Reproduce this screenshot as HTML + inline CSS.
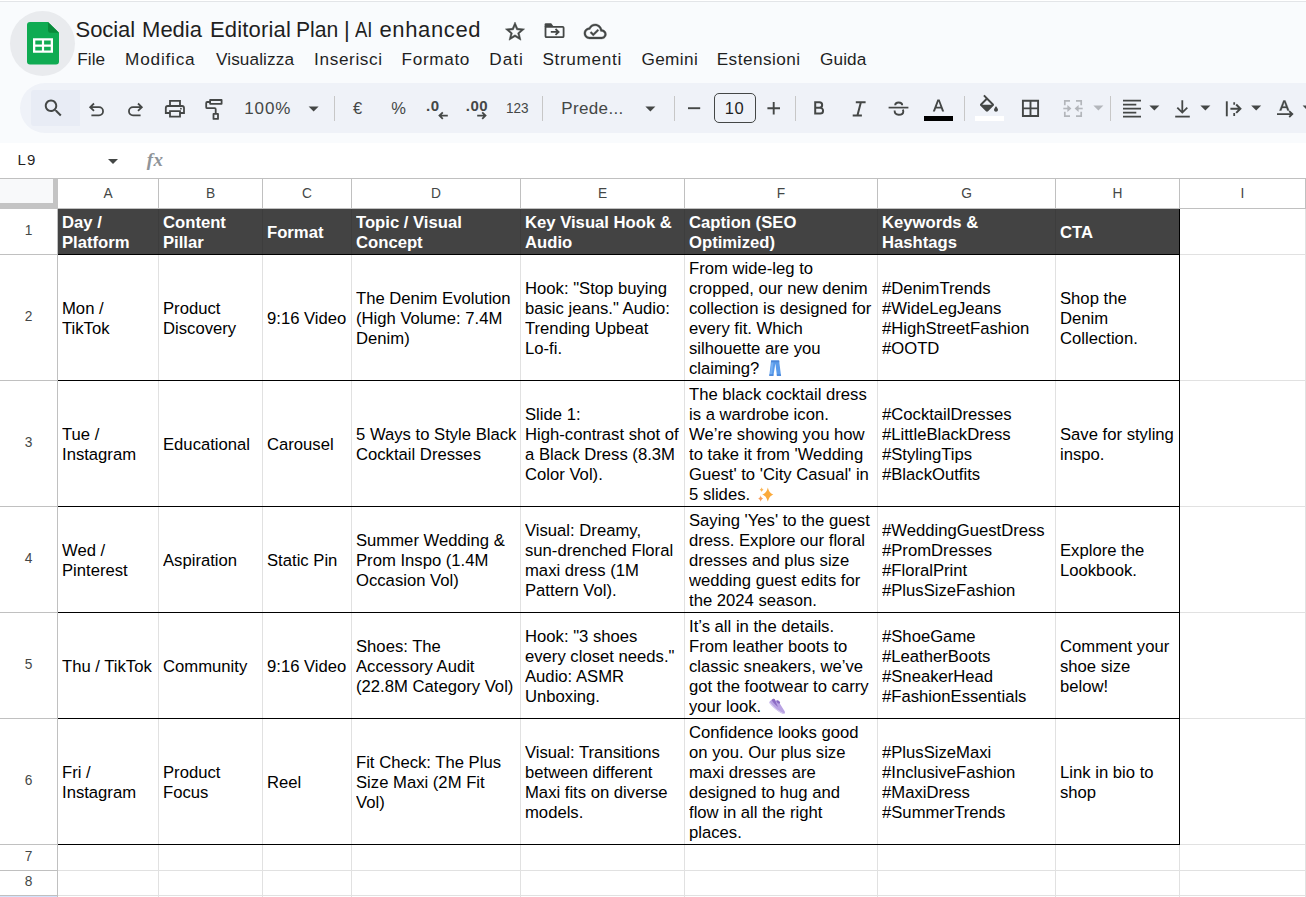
<!DOCTYPE html><html><head><meta charset="utf-8"><title>Social Media Editorial Plan</title><style>
*{box-sizing:border-box;margin:0;padding:0}
html,body{width:1306px;height:897px;overflow:hidden;background:#f9fbfd}
body{font-family:"Liberation Sans",sans-serif;position:relative;color:#1f1f1f}
.abs{position:absolute}
.t{position:absolute;white-space:nowrap;line-height:1}
.ln{position:absolute}
.cell{position:absolute;display:flex;align-items:center;font-size:16.67px;line-height:20px;white-space:nowrap;color:#000;overflow:hidden}
.hd{color:#fff;font-weight:bold}
.ch{position:absolute;top:179px;height:29px;text-align:center;font-size:13.75px;line-height:29px;color:#444746}
.rh{position:absolute;left:0;width:57px;text-align:center;font-size:13.75px;color:#444746;margin-top:-1px}
svg{position:absolute;overflow:visible}
</style></head><body>
<div class="abs" style="left:20px;top:83px;width:1320px;height:50px;border-radius:25px;background:#eff2f8"></div>
<div class="abs" style="left:31px;top:89.5px;width:48.7px;height:36px;border-radius:3px 0 0 3px;background:#e8ecf5"></div>
<div class="abs" style="left:0;top:143px;width:1306px;height:36px;background:#fff"></div>
<div class="abs" style="left:0;top:179px;width:1306px;height:718px;background:#fff"></div>
<div class="abs" style="left:0;top:0;width:1306px;height:1px;background:#fff"></div>
<div class="abs" style="left:0;top:1px;width:1306px;height:1px;background:#e3e5e8"></div>
<div class="abs" style="left:10px;top:11px;width:65px;height:65px;border-radius:50%;background:#e9ebee"></div>
<svg style="left:27px;top:21.6px" width="32" height="42.4" viewBox="0 0 32 43" preserveAspectRatio="none">
<path d="M3 0H21L32 11V40a3 3 0 0 1-3 3H3a3 3 0 0 1-3-3V3a3 3 0 0 1 3-3z" fill="#0fab52"/>
<path d="M21 0L32 11H24a3 3 0 0 1-3-3z" fill="#088a3a"/>
<path d="M6 16.5H26V31.3H6zM8.3 18.8V22.8H14.9V18.8zM17.1 18.8V22.8H23.7V18.8zM8.3 25V29H14.9V25zM17.1 25V29H23.7V25z" fill="#fff" fill-rule="evenodd"/>
</svg>
<div class="t" style="left:75.60px;top:17.28px;font-size:22px;line-height:26px;letter-spacing:-0.086px;color:#1f1f1f">Social</div>
<div class="t" style="left:142.10px;top:17.28px;font-size:22px;line-height:26px;letter-spacing:-0.021px;color:#1f1f1f">Media</div>
<div class="t" style="left:209.90px;top:17.28px;font-size:22px;line-height:26px;letter-spacing:0.188px;color:#1f1f1f">Editorial</div>
<div class="t" style="left:296.24px;top:17.28px;font-size:22px;line-height:26px;transform:scaleX(0.9618);transform-origin:0 0;color:#1f1f1f">Plan</div>
<div class="t" style="left:344.00px;top:17.28px;font-size:22px;line-height:26px;letter-spacing:0.000px;color:#1f1f1f">|</div>
<div class="t" style="left:354.80px;top:17.28px;font-size:22px;line-height:26px;transform:scaleX(0.8387);transform-origin:0 0;color:#1f1f1f">AI</div>
<div class="t" style="left:379.50px;top:17.28px;font-size:22px;line-height:26px;letter-spacing:0.627px;color:#1f1f1f">enhanced</div>
<div class="t" style="left:77.30px;top:48.74px;font-size:17.2px;line-height:21px;letter-spacing:0.055px;color:#1f1f1f">File</div>
<div class="t" style="left:125.10px;top:48.74px;font-size:17.2px;line-height:21px;letter-spacing:0.794px;color:#1f1f1f">Modifica</div>
<div class="t" style="left:216.00px;top:48.74px;font-size:17.2px;line-height:21px;letter-spacing:0.099px;color:#1f1f1f">Visualizza</div>
<div class="t" style="left:314.10px;top:48.74px;font-size:17.2px;line-height:21px;letter-spacing:0.623px;color:#1f1f1f">Inserisci</div>
<div class="t" style="left:401.60px;top:48.74px;font-size:17.2px;line-height:21px;letter-spacing:0.628px;color:#1f1f1f">Formato</div>
<div class="t" style="left:489.30px;top:48.74px;font-size:17.2px;line-height:21px;letter-spacing:0.951px;color:#1f1f1f">Dati</div>
<div class="t" style="left:542.40px;top:48.74px;font-size:17.2px;line-height:21px;letter-spacing:0.659px;color:#1f1f1f">Strumenti</div>
<div class="t" style="left:641.40px;top:48.74px;font-size:17.2px;line-height:21px;letter-spacing:0.395px;color:#1f1f1f">Gemini</div>
<div class="t" style="left:716.70px;top:48.74px;font-size:17.2px;line-height:21px;letter-spacing:0.458px;color:#1f1f1f">Estensioni</div>
<div class="t" style="left:820.00px;top:48.74px;font-size:17.2px;line-height:21px;letter-spacing:0.124px;color:#1f1f1f">Guida</div>
<div class="t" style="left:244.30px;top:99.21px;font-size:17px;line-height:20px;letter-spacing:0.845px;color:#444746">100%</div>
<div class="t" style="left:353.00px;top:98.08px;font-size:16.5px;line-height:20px;letter-spacing:0.000px;color:#444746">€</div>
<div class="t" style="left:391.30px;top:98.28px;font-size:16.5px;line-height:20px;letter-spacing:0.000px;color:#444746">%</div>
<div class="t" style="left:505.58px;top:98.97px;font-size:14.8px;line-height:18px;transform:scaleX(0.9165);transform-origin:0 0;color:#444746">123</div>
<div class="t" style="left:561.20px;top:99.21px;font-size:17px;line-height:20px;letter-spacing:0.370px;color:#444746">Prede...</div>
<div class="t" style="left:724.70px;top:98.18px;font-size:16.5px;line-height:20px;letter-spacing:0.523px;color:#1f1f1f">10</div>
<div class="t" style="left:426.00px;top:96.60px;font-size:15px;line-height:18px;letter-spacing:0.633px;color:#444746;font-weight:bold">.0</div>
<div class="t" style="left:465.80px;top:96.60px;font-size:15px;line-height:18px;letter-spacing:0.495px;color:#444746;font-weight:bold">.00</div>
<div class="t" style="left:17.40px;top:151.30px;font-size:15px;line-height:18px;letter-spacing:1.158px;color:#1f1f1f">L9</div>
<div class="t" style="left:146.80px;top:147.92px;font-size:19px;line-height:23px;letter-spacing:0.273px;color:#8f9499;font-weight:bold;font-style:italic;font-family:'Liberation Serif',serif">fx</div>
<div class="abs" style="left:334px;top:96px;width:1px;height:25px;background:#c7c7c7"></div>
<div class="abs" style="left:542px;top:96px;width:1px;height:25px;background:#c7c7c7"></div>
<div class="abs" style="left:674px;top:96px;width:1px;height:25px;background:#c7c7c7"></div>
<div class="abs" style="left:795px;top:96px;width:1px;height:25px;background:#c7c7c7"></div>
<div class="abs" style="left:964px;top:96px;width:1px;height:25px;background:#c7c7c7"></div>
<div class="abs" style="left:1110px;top:96px;width:1px;height:25px;background:#c7c7c7"></div>
<div class="abs" style="left:714px;top:93px;width:42px;height:30px;border:1px solid #444746;border-radius:5px"></div>
<div class="abs" style="left:924px;top:116px;width:29px;height:5px;background:#000"></div>
<div class="abs" style="left:975px;top:116px;width:29px;height:5px;background:#fff"></div>
<svg style="left:0;top:0" width="1306" height="200" viewBox="0 0 1306 200"><path transform="translate(503.5 20.1) scale(0.9583)" d="M22 9.24l-7.19-.62L12 2 9.19 8.63 2 9.24l5.46 4.73L5.82 21 12 17.27 18.18 21l-1.63-7.03L22 9.24zM12 15.4l-3.76 2.27 1-4.28-3.32-2.88 4.38-.38L12 6.1l1.71 4.04 4.38.38-3.32 2.88 1 4.28L12 15.4z" fill="#444746" stroke="#444746" stroke-width="0.5"/><path d="M544.6 26.6V24.5a1.2 1.2 0 0 1 1.2 -1.2H551.2L553.6 26.6z" fill="#444746"/><path d="M545.5 26.8H562.6a1 1 0 0 1 1 1V36.2a1 1 0 0 1 -1 1H546.5a1 1 0 0 1 -1 -1z" fill="none" stroke="#444746" stroke-width="1.8" stroke-linecap="butt" stroke-linejoin="miter"/><path d="M550.8 31.9H558.2M555.5 29L558.6 31.9L555.5 34.8" fill="none" stroke="#444746" stroke-width="1.8" stroke-linecap="butt" stroke-linejoin="miter"/><path transform="translate(583.9 20.15) scale(0.9375)" d="M19.35 10.04C18.67 6.59 15.64 4 12 4 9.11 4 6.6 5.64 5.35 8.04 2.34 8.36 0 10.91 0 14c0 3.31 2.69 6 6 6h13c2.76 0 5-2.24 5-5 0-2.64-2.05-4.78-4.65-4.96zM19 18H6c-2.21 0-4-1.79-4-4 0-2.05 1.53-3.76 3.56-3.97l1.07-.11.5-.95C8.08 7.14 9.94 6 12 6c2.62 0 4.88 1.86 5.39 4.43l.3 1.5 1.53.11c1.56.1 2.78 1.41 2.78 2.96 0 1.65-1.35 3-3 3zm-9-3.82l-2.09-2.09L6.5 13.5 10 17l6.01-6.01-1.41-1.41z" fill="#444746" stroke="#444746" stroke-width="0.4"/><path transform="translate(41.9 96.6) scale(0.9583)" d="M15.5 14h-.79l-.28-.27C15.41 12.59 16 11.11 16 9.5 16 5.91 13.09 3 9.5 3S3 5.91 3 9.5 5.91 16 9.5 16c1.61 0 3.09-.59 4.23-1.57l.27.28v.79l5 4.99L20.49 19l-4.99-5zm-6 0C7.01 14 5 11.99 5 9.5S7.01 5 9.5 5 14 7.01 14 9.5 11.99 14 9.5 14z" fill="#444746"/><path d="M94 103.5L90.2 107.2L94 110.9M90.3 107.2H99a4.05 4.05 0 0 1 0 8.1H91.4" fill="none" stroke="#444746" stroke-width="1.8" stroke-linecap="butt" stroke-linejoin="miter"/><path d="M138 103.5L141.8 107.2L138 110.9M141.7 107.2H133a4.05 4.05 0 0 0 0 8.1H140.6" fill="none" stroke="#444746" stroke-width="1.8" stroke-linecap="butt" stroke-linejoin="miter"/><path d="M170 105.6V100.9H180V105.6" fill="none" stroke="#444746" stroke-width="1.8" stroke-linecap="butt" stroke-linejoin="miter"/><path d="M170 113H165.8V108a2 2 0 0 1 2 -2H182a2 2 0 0 1 2 2V113H180" fill="none" stroke="#444746" stroke-width="1.8" stroke-linecap="butt" stroke-linejoin="miter"/><path d="M170 111.2H180V116.6H170z" fill="none" stroke="#444746" stroke-width="1.8" stroke-linecap="butt" stroke-linejoin="miter"/><circle cx="180.9" cy="108.7" r="0.9" fill="#444746"/><path d="M210.1 100H221.6V103.8H210.1z" fill="none" stroke="#444746" stroke-width="1.8" stroke-linecap="butt" stroke-linejoin="round"/><path d="M210.1 102H207.2a1 1 0 0 0 -1 1V107.2a1 1 0 0 0 1 1H214.7a1 1 0 0 1 1 1V113.5" fill="none" stroke="#444746" stroke-width="1.8" stroke-linecap="butt" stroke-linejoin="miter"/><path d="M213.5 113.9H218V118.9H213.5z" fill="none" stroke="#444746" stroke-width="1.8" stroke-linecap="butt" stroke-linejoin="round"/><path d="M308.6 106.5h10l-5.0 5z" fill="#444746"/><path d="M447.8 115.6H439.5M442.8 112.4L439.5 115.6L442.8 118.8" fill="none" stroke="#444746" stroke-width="1.8" stroke-linecap="butt" stroke-linejoin="miter"/><path d="M477.2 115.6H485.5M482.2 112.4L485.5 115.6L482.2 118.8" fill="none" stroke="#444746" stroke-width="1.8" stroke-linecap="butt" stroke-linejoin="miter"/><path d="M645.4 106.5h10l-5.0 5z" fill="#444746"/><path d="M688 108.2H700.2" fill="none" stroke="#444746" stroke-width="1.9" stroke-linecap="butt" stroke-linejoin="miter"/><path d="M767.4 108.2H780M773.7 101.9V114.5" fill="none" stroke="#444746" stroke-width="1.9" stroke-linecap="butt" stroke-linejoin="miter"/><path d="M815.2 101.3V114.5M814.2 102.3H819.4a2.75 2.75 0 0 1 0 5.5H815.2M815.2 107.8H820.2a2.85 2.85 0 0 1 0 5.7H814.2" fill="none" stroke="#444746" stroke-width="2.0" stroke-linecap="butt" stroke-linejoin="miter"/><path d="M855.8 102.3H865.6M852.7 115.6H861.9M860.9 102.3L857.4 115.6" fill="none" stroke="#444746" stroke-width="2.0" stroke-linecap="butt" stroke-linejoin="miter"/><path d="M888.6 107.6H908.4" fill="none" stroke="#444746" stroke-width="1.7" stroke-linecap="butt" stroke-linejoin="miter"/><path d="M902.2 105.2C902.2 103.3 900.7 102.5 898.6 102.5C896.5 102.5 895.2 103.4 895.2 105.2" fill="none" stroke="#444746" stroke-width="1.9" stroke-linecap="butt" stroke-linejoin="miter"/><path d="M894.6 110.6C894.6 113.3 896.2 114.8 898.7 114.8C901.5 114.8 903.3 113.5 903.3 111.4C903.3 110.7 903.1 110.1 902.6 109.6" fill="none" stroke="#444746" stroke-width="1.9" stroke-linecap="butt" stroke-linejoin="miter"/><path d="M937.4 99.6h2.2l4.6 12h-2.1l-1.1-3.1h-5l-1.1 3.1h-2.1zM936.7 106.8h3.7l-1.85-5.2z" fill="#444746" fill-rule="evenodd"/><path transform="translate(977 94.7) scale(1.0000)" d="M16.56 8.94L7.62 0 6.21 1.41l2.38 2.38-5.15 5.15c-.59.59-.59 1.54 0 2.12l5.5 5.5c.29.29.68.44 1.06.44s.77-.15 1.06-.44l5.5-5.5c.59-.58.59-1.53 0-2.12zM5.21 10L10 5.21 14.79 10H5.21zM19 11.5s-2 2.17-2 3.5c0 1.1.9 2 2 2s2-.9 2-2c0-1.33-2-3.5-2-3.5z" fill="#444746"/><path transform="translate(1019.1 97) scale(0.9500)" d="M3 3v18h18V3H3zm8 16H5v-6h6v6zm0-8H5V5h6v6zm8 8h-6v-6h6v6zm0-8h-6V5h6v6z" fill="#444746"/><path d="M1070 100.9H1064.8V105.3M1070 116.2H1064.8V111.8M1076 100.9H1081.2V105.3M1076 116.2H1081.2V111.8" fill="none" stroke="#b3b6bb" stroke-width="1.7" stroke-linecap="butt" stroke-linejoin="miter"/><path d="M1063.3 108.5H1068.5" fill="none" stroke="#b3b6bb" stroke-width="1.6" stroke-linecap="butt" stroke-linejoin="miter"/><path d="M1067.4 104.9L1071.4 108.5L1067.4 112.1z" fill="#b3b6bb"/><path d="M1082.7 108.5H1077.5" fill="none" stroke="#b3b6bb" stroke-width="1.6" stroke-linecap="butt" stroke-linejoin="miter"/><path d="M1078.6 104.9L1074.6 108.5L1078.6 112.1z" fill="#b3b6bb"/><path d="M1093.4 105.6h10l-5.0 5z" fill="#b3b6bb"/><path d="M1123 100.5H1141M1123 104.55H1136.3M1123 108.6H1141M1123 112.55H1136.3M1123 116.5H1141" fill="none" stroke="#444746" stroke-width="1.75" stroke-linecap="butt" stroke-linejoin="miter"/><path d="M1149.4 105.6h10l-5.0 5z" fill="#444746"/><path d="M1182.3 100.2V112.4M1177.3 107.6L1182.3 112.6L1187.3 107.6" fill="none" stroke="#444746" stroke-width="1.8" stroke-linecap="butt" stroke-linejoin="miter"/><path d="M1175.2 116.6H1189.8" fill="none" stroke="#444746" stroke-width="1.8" stroke-linecap="butt" stroke-linejoin="miter"/><path d="M1200.4 105.6h10l-5.0 5z" fill="#444746"/><path d="M1226.8 101.3V116.3" fill="none" stroke="#444746" stroke-width="1.9" stroke-linecap="butt" stroke-linejoin="miter"/><path d="M1230.4 108.7H1239.6M1236.2 104.5L1240.4 108.7L1236.2 112.9" fill="none" stroke="#444746" stroke-width="2.0" stroke-linecap="butt" stroke-linejoin="miter"/><path d="M1234.2 102.2V104.8M1234.2 112.9V116" fill="none" stroke="#444746" stroke-width="1.8" stroke-linecap="butt" stroke-linejoin="miter"/><path d="M1251.2 105.6h10l-5.0 5z" fill="#444746"/><path d="M1283.4 100.5h1.9l3.9 10h-1.8l-.95-2.6h-4.2l-.95 2.6h-1.8zM1282.8 106.4h3.1l-1.55-4.3z" fill="#444746" fill-rule="evenodd" stroke="#444746" stroke-width="0.35"/><path d="M1277 114.1H1291.8M1289.2 111.2L1292.3 114.1L1289.2 117" fill="none" stroke="#444746" stroke-width="1.8" stroke-linecap="butt" stroke-linejoin="miter"/><path d="M1302.6 105.6h10l-5.0 5z" fill="#444746"/></svg>
<svg style="left:107.5px;top:159px" width="10" height="5" viewBox="0 0 10 5"><path d="M0 0H10L5 5z" fill="#444746"/></svg>
<div class="ln" style="left:0;top:178px;width:1306px;height:1px;background:#c0c0c0"></div>
<div class="abs" style="left:0;top:179px;width:53px;height:24px;background:#f8f9fa"></div>
<div class="abs" style="left:53px;top:179px;width:5px;height:30px;background:#c4c4c4"></div>
<div class="abs" style="left:0;top:203px;width:58px;height:6px;background:#c4c4c4"></div>
<div class="ln" style="left:158px;top:179px;width:1px;height:30px;background:#c0c0c0"></div>
<div class="ln" style="left:262px;top:179px;width:1px;height:30px;background:#c0c0c0"></div>
<div class="ln" style="left:351px;top:179px;width:1px;height:30px;background:#c0c0c0"></div>
<div class="ln" style="left:520px;top:179px;width:1px;height:30px;background:#c0c0c0"></div>
<div class="ln" style="left:684px;top:179px;width:1px;height:30px;background:#c0c0c0"></div>
<div class="ln" style="left:877px;top:179px;width:1px;height:30px;background:#c0c0c0"></div>
<div class="ln" style="left:1055px;top:179px;width:1px;height:30px;background:#c0c0c0"></div>
<div class="ln" style="left:1179px;top:179px;width:1px;height:30px;background:#c0c0c0"></div>
<div class="ln" style="left:1305px;top:179px;width:1px;height:30px;background:#c0c0c0"></div>
<div class="ch" style="left:58px;width:100px">A</div>
<div class="ch" style="left:159px;width:103px">B</div>
<div class="ch" style="left:263px;width:88px">C</div>
<div class="ch" style="left:352px;width:168px">D</div>
<div class="ch" style="left:521px;width:163px">E</div>
<div class="ch" style="left:685px;width:192px">F</div>
<div class="ch" style="left:878px;width:177px">G</div>
<div class="ch" style="left:1056px;width:123px">H</div>
<div class="ch" style="left:1180px;width:125px">I</div>
<div class="ln" style="left:58px;top:208px;width:1248px;height:1px;background:#c0c0c0"></div>
<div class="ln" style="left:158px;top:209px;width:1px;height:688px;background:#e1e1e1"></div>
<div class="ln" style="left:262px;top:209px;width:1px;height:688px;background:#e1e1e1"></div>
<div class="ln" style="left:351px;top:209px;width:1px;height:688px;background:#e1e1e1"></div>
<div class="ln" style="left:520px;top:209px;width:1px;height:688px;background:#e1e1e1"></div>
<div class="ln" style="left:684px;top:209px;width:1px;height:688px;background:#e1e1e1"></div>
<div class="ln" style="left:877px;top:209px;width:1px;height:688px;background:#e1e1e1"></div>
<div class="ln" style="left:1055px;top:209px;width:1px;height:688px;background:#e1e1e1"></div>
<div class="ln" style="left:1179px;top:209px;width:1px;height:688px;background:#e1e1e1"></div>
<div class="ln" style="left:1305px;top:209px;width:1px;height:688px;background:#e1e1e1"></div>
<div class="ln" style="left:58px;top:254px;width:1248px;height:1px;background:#e1e1e1"></div>
<div class="ln" style="left:58px;top:380px;width:1248px;height:1px;background:#e1e1e1"></div>
<div class="ln" style="left:58px;top:506px;width:1248px;height:1px;background:#e1e1e1"></div>
<div class="ln" style="left:58px;top:612px;width:1248px;height:1px;background:#e1e1e1"></div>
<div class="ln" style="left:58px;top:718px;width:1248px;height:1px;background:#e1e1e1"></div>
<div class="ln" style="left:58px;top:844px;width:1248px;height:1px;background:#e1e1e1"></div>
<div class="ln" style="left:58px;top:870px;width:1248px;height:1px;background:#e1e1e1"></div>
<div class="ln" style="left:58px;top:895px;width:1248px;height:1px;background:#e1e1e1"></div>
<div class="ln" style="left:57px;top:209px;width:1px;height:688px;background:#c0c0c0"></div>
<div class="ln" style="left:0;top:254px;width:57px;height:1px;background:#c0c0c0"></div>
<div class="ln" style="left:0;top:380px;width:57px;height:1px;background:#c0c0c0"></div>
<div class="ln" style="left:0;top:506px;width:57px;height:1px;background:#c0c0c0"></div>
<div class="ln" style="left:0;top:612px;width:57px;height:1px;background:#c0c0c0"></div>
<div class="ln" style="left:0;top:718px;width:57px;height:1px;background:#c0c0c0"></div>
<div class="ln" style="left:0;top:844px;width:57px;height:1px;background:#c0c0c0"></div>
<div class="ln" style="left:0;top:870px;width:57px;height:1px;background:#c0c0c0"></div>
<div class="ln" style="left:0;top:895px;width:57px;height:1px;background:#c0c0c0"></div>
<div class="rh" style="top:209px;height:45px;line-height:45px">1</div>
<div class="rh" style="top:255px;height:125px;line-height:125px">2</div>
<div class="rh" style="top:381px;height:125px;line-height:125px">3</div>
<div class="rh" style="top:507px;height:105px;line-height:105px">4</div>
<div class="rh" style="top:613px;height:105px;line-height:105px">5</div>
<div class="rh" style="top:719px;height:125px;line-height:125px">6</div>
<div class="rh" style="top:845px;height:25px;line-height:25px">7</div>
<div class="rh" style="top:871px;height:24px;line-height:24px">8</div>
<div class="abs" style="left:0;top:896px;width:57px;height:1px;background:#d3e3fd"></div>
<div class="abs" style="left:58px;top:209px;width:1121px;height:45px;background:#434343"></div>
<div class="ln" style="left:158px;top:209px;width:1px;height:45px;background:#3d3d3d"></div>
<div class="ln" style="left:262px;top:209px;width:1px;height:45px;background:#3d3d3d"></div>
<div class="ln" style="left:351px;top:209px;width:1px;height:45px;background:#3d3d3d"></div>
<div class="ln" style="left:520px;top:209px;width:1px;height:45px;background:#3d3d3d"></div>
<div class="ln" style="left:684px;top:209px;width:1px;height:45px;background:#3d3d3d"></div>
<div class="ln" style="left:877px;top:209px;width:1px;height:45px;background:#3d3d3d"></div>
<div class="ln" style="left:1055px;top:209px;width:1px;height:45px;background:#3d3d3d"></div>
<div class="ln" style="left:58px;top:254px;width:1122px;height:1px;background:#000"></div>
<div class="ln" style="left:58px;top:380px;width:1122px;height:1px;background:#000"></div>
<div class="ln" style="left:58px;top:506px;width:1122px;height:1px;background:#000"></div>
<div class="ln" style="left:58px;top:612px;width:1122px;height:1px;background:#000"></div>
<div class="ln" style="left:58px;top:718px;width:1122px;height:1px;background:#000"></div>
<div class="ln" style="left:58px;top:844px;width:1122px;height:1px;background:#000"></div>
<div class="ln" style="left:1179px;top:209px;width:1px;height:636px;background:#000"></div>
<div class="cell hd" style="left:62px;top:210px;width:96px;height:45px"><div>Day /<br>Platform</div></div>
<div class="cell hd" style="left:163px;top:210px;width:99px;height:45px"><div>Content<br>Pillar</div></div>
<div class="cell hd" style="left:267px;top:210px;width:84px;height:45px"><div>Format</div></div>
<div class="cell hd" style="left:356px;top:210px;width:164px;height:45px"><div>Topic / Visual<br>Concept</div></div>
<div class="cell hd" style="left:525px;top:210px;width:159px;height:45px"><div>Key Visual Hook &amp;<br>Audio</div></div>
<div class="cell hd" style="left:689px;top:210px;width:188px;height:45px"><div>Caption (SEO<br>Optimized)</div></div>
<div class="cell hd" style="left:882px;top:210px;width:173px;height:45px"><div>Keywords &amp;<br>Hashtags</div></div>
<div class="cell hd" style="left:1060px;top:210px;width:119px;height:45px"><div>CTA</div></div>
<div class="cell " style="left:62px;top:256px;width:96px;height:125px"><div>Mon /<br>TikTok</div></div>
<div class="cell " style="left:163px;top:256px;width:99px;height:125px"><div>Product<br>Discovery</div></div>
<div class="cell " style="left:267px;top:256px;width:84px;height:125px"><div>9:16 Video</div></div>
<div class="cell " style="left:356px;top:256px;width:164px;height:125px"><div>The Denim Evolution<br>(High Volume: 7.4M<br>Denim)</div></div>
<div class="cell " style="left:525px;top:256px;width:159px;height:125px"><div>Hook: "Stop buying<br>basic jeans." Audio:<br>Trending Upbeat<br>Lo-fi.</div></div>
<div class="cell " style="left:689px;top:256px;width:188px;height:125px"><div>From wide-leg to<br>cropped, our new denim<br>collection is designed for<br>every fit. Which<br>silhouette are you<br>claiming? <svg class="emo" style="position:relative;display:inline-block;vertical-align:-3px;margin-left:5px" width="12.4" height="16.4" viewBox="0 0 13 17"><path d="M2.2 0.3H10.6L12.6 16.3H8.3L6.7 3.6L4.6 16.3H0.3z" fill="#5a9bea"/><path d="M2.6 2.2H4.6L3 15H1z" fill="#76b0f3"/><path d="M2.2 0.3H10.6L10.9 2.2H2z" fill="#4a86d8"/><path d="M0.3 15H4.8L4.6 16.5H0.3zM8.1 15H12.5L12.7 16.5H8.3z" fill="#3f7fd6"/></svg></div></div>
<div class="cell " style="left:882px;top:256px;width:173px;height:125px"><div>#DenimTrends<br>#WideLegJeans<br>#HighStreetFashion<br>#OOTD</div></div>
<div class="cell " style="left:1060px;top:256px;width:119px;height:125px"><div>Shop the<br>Denim<br>Collection.</div></div>
<div class="cell " style="left:62px;top:382px;width:96px;height:125px"><div>Tue /<br>Instagram</div></div>
<div class="cell " style="left:163px;top:382px;width:99px;height:125px"><div>Educational</div></div>
<div class="cell " style="left:267px;top:382px;width:84px;height:125px"><div>Carousel</div></div>
<div class="cell " style="left:356px;top:382px;width:164px;height:125px"><div>5 Ways to Style Black<br>Cocktail Dresses</div></div>
<div class="cell " style="left:525px;top:382px;width:159px;height:125px"><div>Slide 1:<br>High-contrast shot of<br>a Black Dress (8.3M<br>Color Vol).</div></div>
<div class="cell " style="left:689px;top:382px;width:188px;height:125px"><div>The black cocktail dress<br>is a wardrobe icon.<br>We’re showing you how<br>to take it from 'Wedding<br>Guest' to 'City Casual' in<br>5 slides. <svg class="emo" style="position:relative;display:inline-block;vertical-align:-3px;margin-left:2.5px" width="16.5" height="16" viewBox="0 0 16 16"><path d="M10.60 0.40C11.81 4.52 12.91 5.94 16.10 7.50C12.91 9.06 11.81 10.48 10.60 14.60C9.39 10.48 8.29 9.06 5.10 7.50C8.29 5.94 9.39 4.52 10.60 0.40z" fill="#fbaa3c"/><path d="M4.40 0.30C4.82 1.69 5.20 2.17 6.30 2.70C5.20 3.23 4.82 3.71 4.40 5.10C3.98 3.71 3.60 3.23 2.50 2.70C3.60 2.17 3.98 1.69 4.40 0.30z" fill="#fbb656"/><path d="M3.40 8.50C3.95 10.30 4.45 10.92 5.90 11.60C4.45 12.28 3.95 12.90 3.40 14.70C2.85 12.90 2.35 12.28 0.90 11.60C2.35 10.92 2.85 10.30 3.40 8.50z" fill="#f8a05c"/></svg></div></div>
<div class="cell " style="left:882px;top:382px;width:173px;height:125px"><div>#CocktailDresses<br>#LittleBlackDress<br>#StylingTips<br>#BlackOutfits</div></div>
<div class="cell " style="left:1060px;top:382px;width:119px;height:125px"><div>Save for styling<br>inspo.</div></div>
<div class="cell " style="left:62px;top:508px;width:96px;height:105px"><div>Wed /<br>Pinterest</div></div>
<div class="cell " style="left:163px;top:508px;width:99px;height:105px"><div>Aspiration</div></div>
<div class="cell " style="left:267px;top:508px;width:84px;height:105px"><div>Static Pin</div></div>
<div class="cell " style="left:356px;top:508px;width:164px;height:105px"><div>Summer Wedding &amp;<br>Prom Inspo (1.4M<br>Occasion Vol)</div></div>
<div class="cell " style="left:525px;top:508px;width:159px;height:105px"><div>Visual: Dreamy,<br>sun-drenched Floral<br>maxi dress (1M<br>Pattern Vol).</div></div>
<div class="cell " style="left:689px;top:508px;width:188px;height:105px"><div>Saying 'Yes' to the guest<br>dress. Explore our floral<br>dresses and plus size<br>wedding guest edits for<br>the 2024 season.</div></div>
<div class="cell " style="left:882px;top:508px;width:173px;height:105px"><div>#WeddingGuestDress<br>#PromDresses<br>#FloralPrint<br>#PlusSizeFashion</div></div>
<div class="cell " style="left:1060px;top:508px;width:119px;height:105px"><div>Explore the<br>Lookbook.</div></div>
<div class="cell " style="left:62px;top:614px;width:96px;height:105px"><div>Thu / TikTok</div></div>
<div class="cell " style="left:163px;top:614px;width:99px;height:105px"><div>Community</div></div>
<div class="cell " style="left:267px;top:614px;width:84px;height:105px"><div>9:16 Video</div></div>
<div class="cell " style="left:356px;top:614px;width:164px;height:105px"><div>Shoes: The<br>Accessory Audit<br>(22.8M Category Vol)</div></div>
<div class="cell " style="left:525px;top:614px;width:159px;height:105px"><div>Hook: "3 shoes<br>every closet needs."<br>Audio: ASMR<br>Unboxing.</div></div>
<div class="cell " style="left:689px;top:614px;width:188px;height:105px"><div>It’s all in the details.<br>From leather boots to<br>classic sneakers, we’ve<br>got the footwear to carry<br>your look. <svg class="emo" style="position:relative;display:inline-block;vertical-align:-3px;margin-left:3px" width="17" height="17" viewBox="0 0 17 17"><path d="M4.5 0.8C5.6 0.6 6 1.6 6.4 2.8C7.6 2.2 9.4 2.6 10 4.2L15.8 13.6C16.4 15 15.4 16.4 13.8 15.8C9.6 14.2 4 9.6 0.8 5.6C0 4.6 0.4 3.6 1.2 3C2.4 2.2 3.4 1 4.5 0.8z" fill="#b9a3e3"/><path d="M4.5 0.8C5.6 0.6 6 1.6 6.4 2.8C7.2 5 8 7 9 9C6.6 7.4 4 4.6 2.6 2C3.2 1.4 3.8 0.9 4.5 0.8z" fill="#8d6cc4"/><ellipse cx="9.3" cy="3.9" rx="2.1" ry="1.3" transform="rotate(38 9.3 3.9)" fill="#8a6bc2"/><path d="M0.8 5.6C4 9.6 9.6 14.2 13.8 15.8C14.6 16.1 15.3 15.9 15.7 15.4C11 14 4.6 9 1 4.2C0.5 4.6 0.4 5.1 0.8 5.6z" fill="#d9cdf1"/></svg></div></div>
<div class="cell " style="left:882px;top:614px;width:173px;height:105px"><div>#ShoeGame<br>#LeatherBoots<br>#SneakerHead<br>#FashionEssentials</div></div>
<div class="cell " style="left:1060px;top:614px;width:119px;height:105px"><div>Comment your<br>shoe size<br>below!</div></div>
<div class="cell " style="left:62px;top:720px;width:96px;height:125px"><div>Fri /<br>Instagram</div></div>
<div class="cell " style="left:163px;top:720px;width:99px;height:125px"><div>Product<br>Focus</div></div>
<div class="cell " style="left:267px;top:720px;width:84px;height:125px"><div>Reel</div></div>
<div class="cell " style="left:356px;top:720px;width:164px;height:125px"><div>Fit Check: The Plus<br>Size Maxi (2M Fit<br>Vol)</div></div>
<div class="cell " style="left:525px;top:720px;width:159px;height:125px"><div>Visual: Transitions<br>between different<br>Maxi fits on diverse<br>models.</div></div>
<div class="cell " style="left:689px;top:720px;width:188px;height:125px"><div>Confidence looks good<br>on you. Our plus size<br>maxi dresses are<br>designed to hug and<br>flow in all the right<br>places.</div></div>
<div class="cell " style="left:882px;top:720px;width:173px;height:125px"><div>#PlusSizeMaxi<br>#InclusiveFashion<br>#MaxiDress<br>#SummerTrends</div></div>
<div class="cell " style="left:1060px;top:720px;width:119px;height:125px"><div>Link in bio to<br>shop</div></div>
</body></html>
